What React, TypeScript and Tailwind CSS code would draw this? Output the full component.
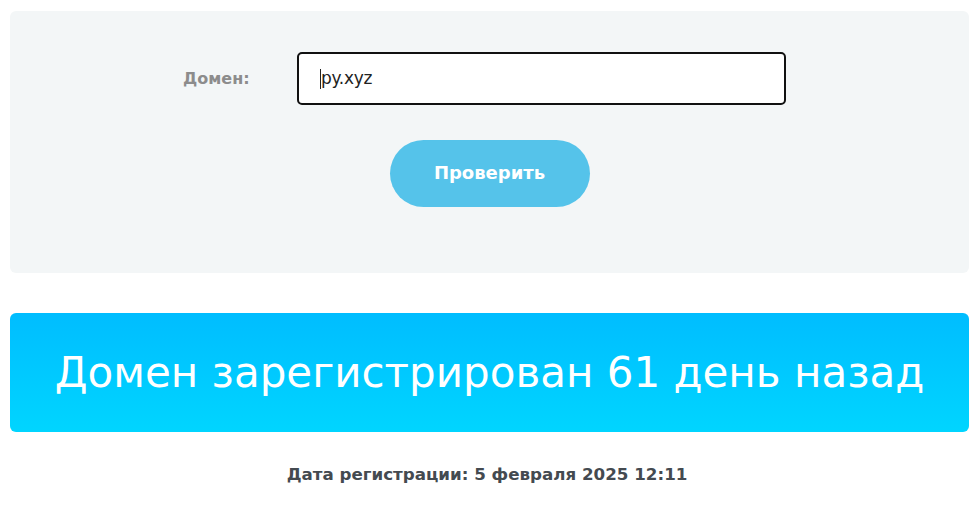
export default function App() {
  return (
    <div className="min-h-screen bg-white pt-[11px]" style={{ fontFamily: '"DejaVu Sans", "Noto Sans", sans-serif' }}>
      <div className="ml-[10px] w-[959px] h-[262px] rounded-[6px] bg-[#f3f6f7] flex flex-col items-center pt-[41px]">
        <div className="flex items-center w-full">
          <label className="w-[287px] pl-[173px] text-[16px] font-bold text-[#8c8c8c]">Домен:</label>
          <div className="w-[489px] h-[53px] rounded-[5px] border-2 border-[#111] bg-white flex items-center pl-[21px]">
            <span className="w-px h-[20px] bg-[#222]" />
            <span className="text-[17px] text-[#222] tracking-[-0.3px]">py.xyz</span>
          </div>
        </div>
        <button className="mt-[35px] w-[200px] h-[67px] rounded-full bg-[#55c3ea] text-white text-[18px] font-bold pb-[3px]">
          Проверить
        </button>
      </div>

      <div className="mt-[40px] ml-[10px] w-[959px] h-[119px] rounded-[6px] bg-gradient-to-b from-[#00bdff] to-[#00d5ff] flex items-center justify-center">
        <h1 className="text-[42px] font-normal text-white leading-none">Домен зарегистрирован 61 день назад</h1>
      </div>

      <p className="mt-[30px] text-center text-[16.7px] font-bold text-[#444a50]">Дата регистрации: 5 февраля 2025 12:11</p>
    </div>
  );
}
